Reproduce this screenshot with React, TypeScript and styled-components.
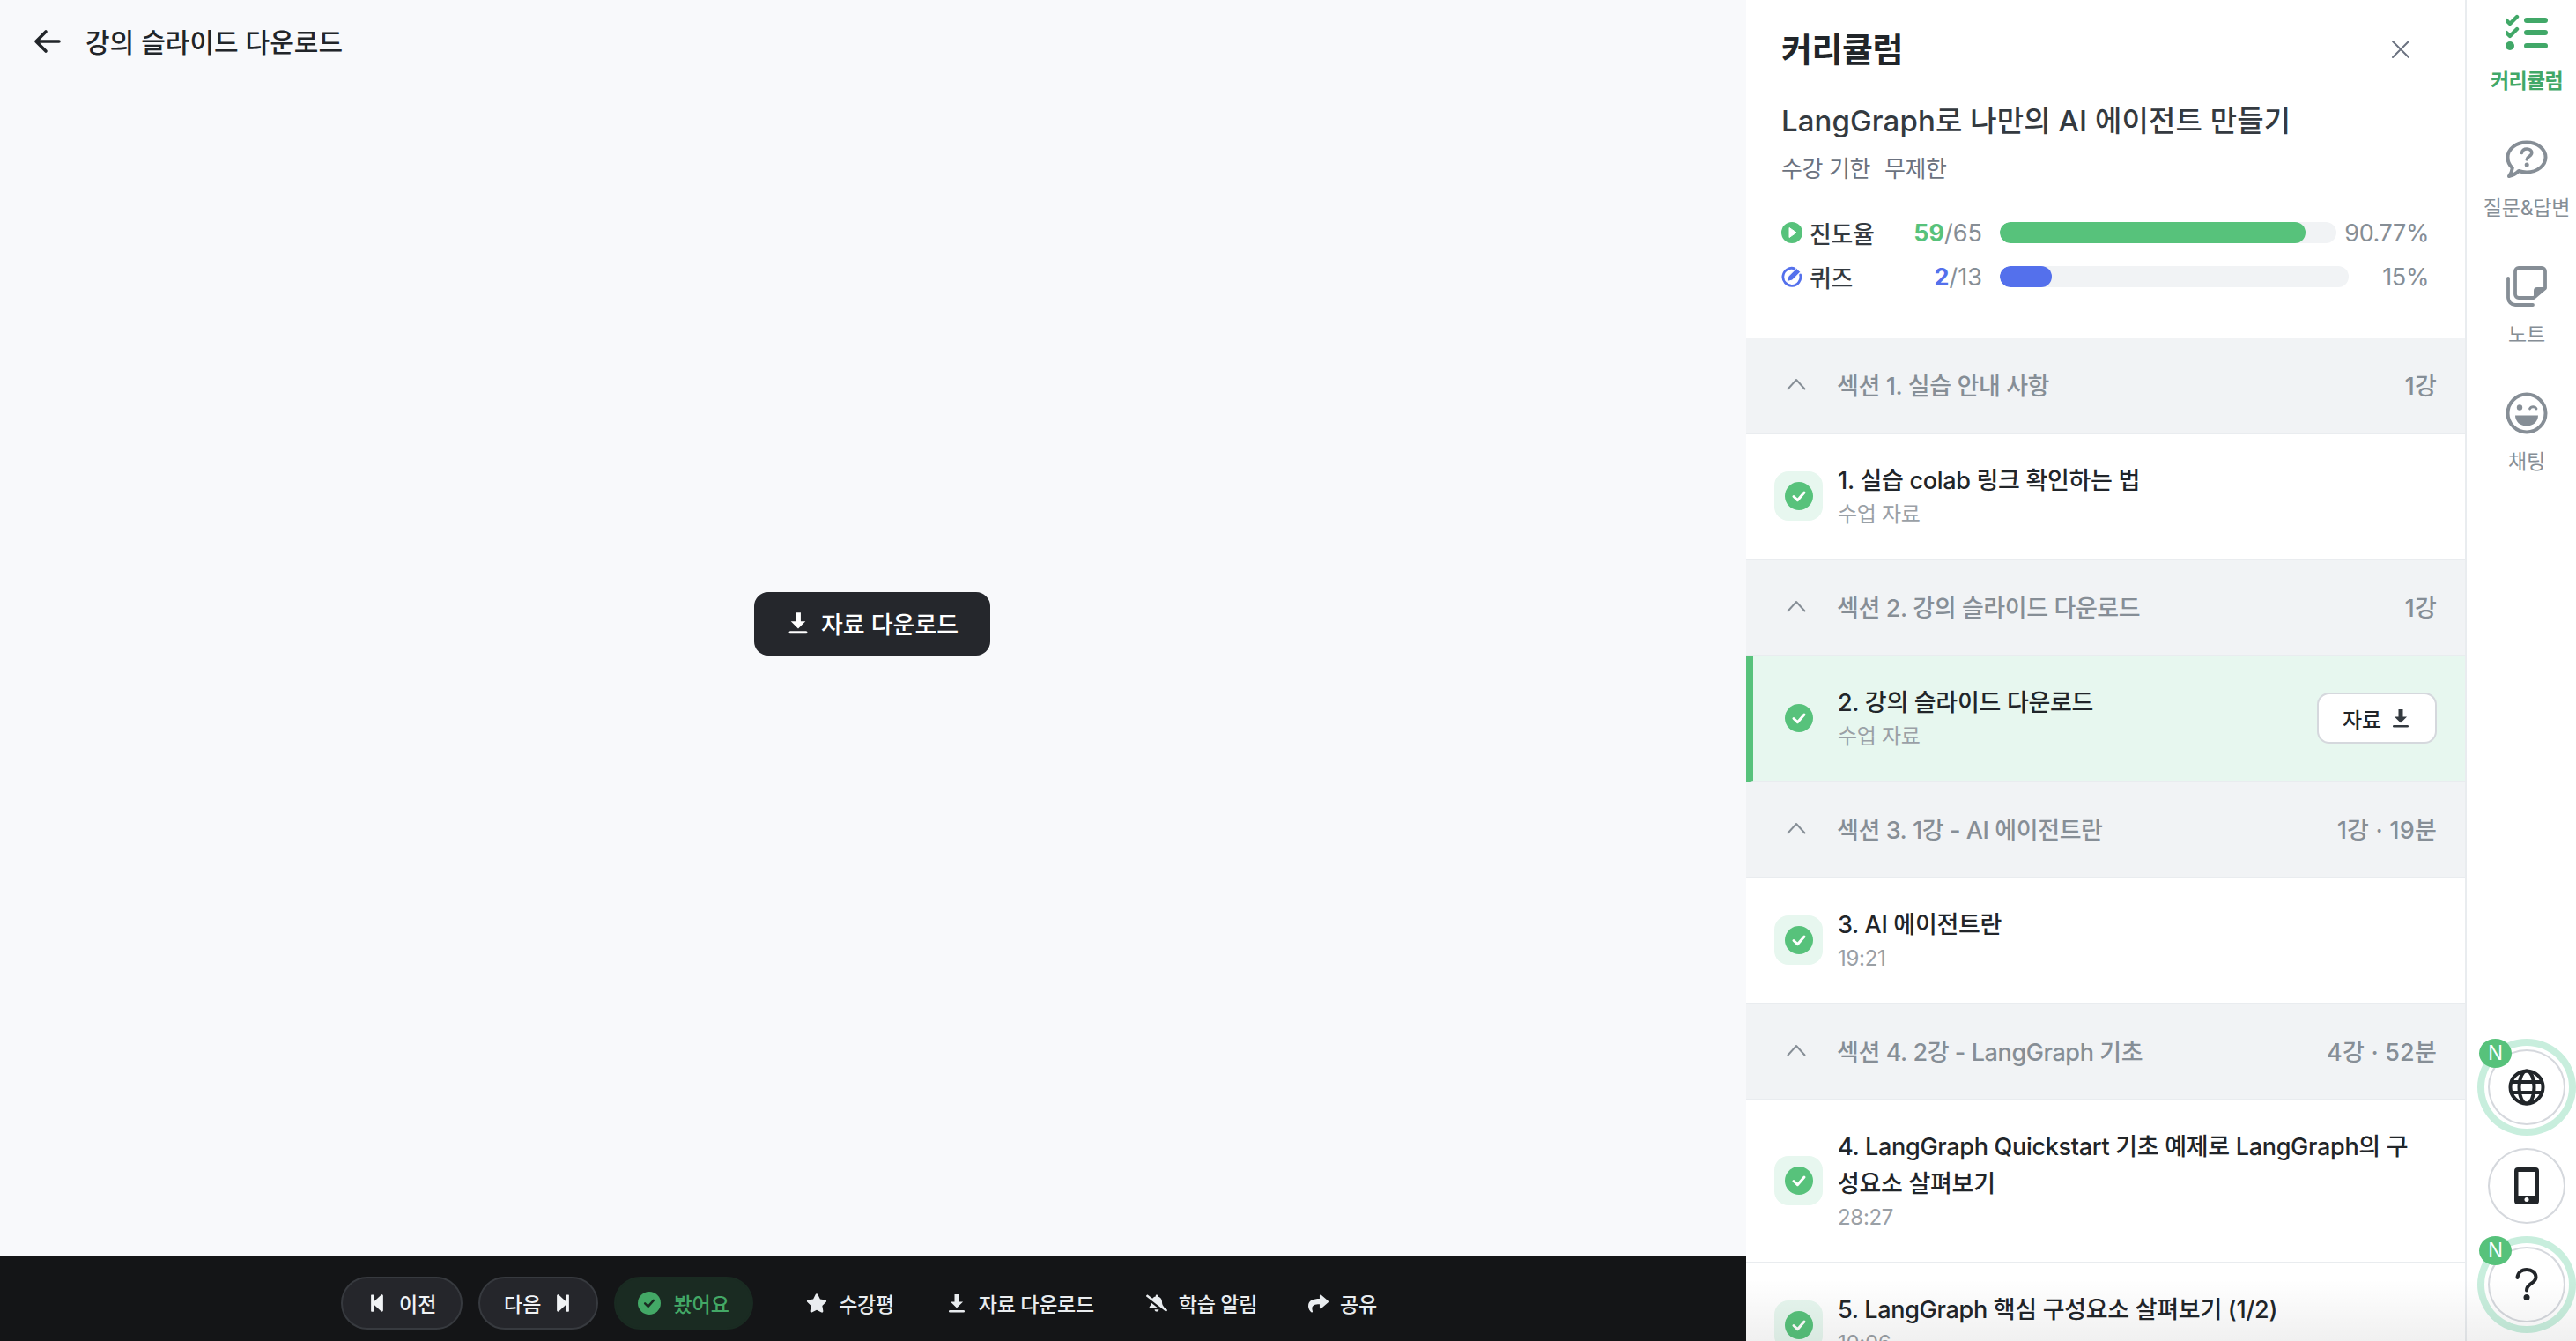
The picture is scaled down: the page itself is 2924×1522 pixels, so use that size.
import React from 'react';
import styled, { createGlobalStyle } from 'styled-components';
import { FaStar, FaShare, FaBellSlash, FaStepBackward, FaStepForward } from 'react-icons/fa';

const GlobalStyle = createGlobalStyle`
  html, body {
    margin: 0;
    padding: 0;
    background: #f8f9fb;
    font-family: Inter, "Noto Sans CJK KR", "Noto Sans", sans-serif;
    overflow: hidden;
  }
  * { box-sizing: border-box; }
`;

const Page = styled.div`
  display: flex;
  width: 2924px;
  height: 1522px;
  overflow: hidden;
`;

const Main = styled.main`
  position: relative;
  flex: 0 0 1982px;
  display: flex;
  flex-direction: column;
  background: #f8f9fb;
`;

const TopBar = styled.header`
  position: absolute;
  top: 0;
  left: 0;
  right: 0;
  height: 94px;
  display: flex;
  align-items: center;
  gap: 27px;
  padding-left: 38px;
`;

const PageTitle = styled.h1`
  margin: -2px 0 0;
  font-size: 30px;
  font-weight: 500;
  letter-spacing: 0;
  color: #212529;
`;

const Stage = styled.div`
  flex: 1;
  display: flex;
  align-items: center;
  justify-content: center;
  padding: 0 2px 10px 0;
`;

const DownloadButton = styled.button`
  display: flex;
  align-items: center;
  justify-content: center;
  gap: 12px;
  width: 268px;
  height: 72px;
  padding: 0 0 2px;
  border: 0;
  border-radius: 16px;
  background: #25272c;
  color: #fff;
  font: 500 27px Inter, "Noto Sans CJK KR", sans-serif;
`;

const BottomBar = styled.footer`
  flex: 0 0 96px;
  display: flex;
  align-items: center;
  justify-content: center;
  padding: 10px 32px 0 0;
  background: #141517;
`;

const Pill = styled.button<{ $seen?: boolean; $w: number }>`
  display: flex;
  align-items: center;
  justify-content: center;
  gap: 14px;
  width: ${(p) => p.$w}px;
  height: 60px;
  margin-right: 18px;
  border-radius: 30px;
  border: 2px solid ${(p) => (p.$seen ? '#1a2b22' : '#373a3f')};
  background: ${(p) => (p.$seen ? '#1a2b22' : '#25262b')};
  color: ${(p) => (p.$seen ? '#43a866' : '#f1f3f5')};
  font: 500 23px Inter, "Noto Sans CJK KR", sans-serif;
`;

const BarAction = styled.button<{ $gap: number }>`
  display: flex;
  align-items: center;
  gap: 13px;
  margin-left: ${(p) => p.$gap}px;
  padding: 0;
  border: 0;
  background: none;
  color: #e9ecef;
  font: 500 23px Inter, "Noto Sans CJK KR", sans-serif;
  letter-spacing: -0.3px;
`;

const Side = styled.div`
  position: relative;
  flex: 1;
  display: flex;
  min-width: 0;
`;

const Panel = styled.aside`
  flex: 0 0 816px;
  display: flex;
  flex-direction: column;
  background: #fff;
  overflow: hidden;
`;

const PanelHead = styled.div`
  flex: 0 0 384px;
  padding: 0 40px;
`;

const PanelTitleRow = styled.div`
  display: flex;
  align-items: center;
  justify-content: space-between;
  height: 112px;
  padding-right: 22px;
`;

const PanelTitle = styled.h2`
  margin: -6px 0 0;
  font-size: 38px;
  font-weight: 700;
  letter-spacing: -0.5px;
  color: #212529;
`;

const CourseTitle = styled.div`
  height: 50px;
  line-height: 50px;
  font-size: 33px;
  font-weight: 500;
  letter-spacing: 0.1px;
  color: #343a40;
`;

const Expire = styled.div`
  display: flex;
  gap: 16px;
  height: 60px;
  padding-top: 6px;
  line-height: 48px;
  font-size: 26px;
  letter-spacing: -0.4px;
  color: #6b7280;
`;

const Stats = styled.div`
  display: flex;
  flex-direction: column;
  gap: 26px;
  margin-top: 30px;
  margin-right: 1px;
`;

const StatRow = styled.div`
  display: flex;
  align-items: center;
  height: 24px;
`;

const StatLabel = styled.div`
  display: flex;
  align-items: center;
  gap: 8px;
  width: 139px;
  font-size: 27px;
  font-weight: 500;
  letter-spacing: -0.4px;
  color: #343a40;
`;

const StatCount = styled.div`
  width: 109px;
  padding-right: 20px;
  text-align: right;
  font-size: 27px;
  color: #868e96;
`;

const StatStrong = styled.strong<{ $color: string }>`
  font-weight: 700;
  color: ${(p) => p.$color};
`;

const Track = styled.div<{ $w: number }>`
  width: ${(p) => p.$w}px;
  height: 24px;
  border-radius: 12px;
  background: #f1f3f5;
  overflow: hidden;
`;

const Fill = styled.div<{ $color: string }>`
  height: 100%;
  border-radius: 12px;
  background: ${(p) => p.$color};
`;

const StatPercent = styled.div`
  flex: 1;
  text-align: right;
  font-size: 27px;
  letter-spacing: -0.4px;
  color: #868e96;
`;

const SectionHead = styled.div`
  flex: 0 0 109px;
  display: flex;
  align-items: center;
  padding: 0 32px 3px 46px;
  border-bottom: 2px solid #e9ecef;
  background: #f1f3f5;
  color: #868e96;
  font-size: 27px;
  font-weight: 500;
  letter-spacing: -0.4px;
`;

const SectionName = styled.div`
  flex: 1;
  margin-left: 35px;
`;

const SectionMeta = styled.span`
  letter-spacing: 0.2px;
`;

const Lesson = styled.div<{ $active?: boolean }>`
  flex: 0 0 auto;
  display: flex;
  align-items: center;
  gap: 17px;
  padding: 32px 32px 33px ${(p) => (p.$active ? '24px' : '32px')};
  border-bottom: 2px solid #e9ecef;
  border-left: ${(p) => (p.$active ? '8px solid #57c27b' : '0')};
  background: ${(p) => (p.$active ? '#e7f7ef' : '#fff')};
`;

const CheckTile = styled.div<{ $active?: boolean }>`
  flex: 0 0 55px;
  display: flex;
  align-items: center;
  justify-content: center;
  height: 56px;
  border-radius: 16px;
  background: ${(p) => (p.$active ? 'transparent' : '#e7f7ef')};
`;

const LessonText = styled.div`
  flex: 1;
  min-width: 0;
  padding-right: 20px;
`;

const LessonTitle = styled.div`
  line-height: 42px;
  font-size: 27px;
  font-weight: 500;
  letter-spacing: -0.3px;
  color: #212529;
`;

const LessonSub = styled.div`
  line-height: 34px;
  font-size: 24px;
  letter-spacing: -0.3px;
  color: #9aa0a6;
`;

const MaterialButton = styled.button`
  flex: 0 0 136px;
  display: flex;
  align-items: center;
  justify-content: center;
  gap: 10px;
  height: 58px;
  border: 2px solid #d5d8dd;
  border-radius: 14px;
  background: #fff;
  color: #212529;
  font: 500 24px Inter, "Noto Sans CJK KR", sans-serif;
`;

const Rail = styled.nav`
  flex: 1;
  display: flex;
  flex-direction: column;
  align-items: center;
  padding-left: 12px;
  border-left: 2px solid #e9ecef;
  background: #fff;
`;

const RailItem = styled.div<{ $active?: boolean }>`
  flex: 0 0 144px;
  display: flex;
  flex-direction: column;
  align-items: center;
  width: 100%;
  padding-top: 14px;
  color: ${(p) => (p.$active ? '#41a868' : '#868e96')};
  font-size: 23px;
  font-weight: ${(p) => (p.$active ? 600 : 400)};
  letter-spacing: ${(p) => (p.$active ? '-0.6px' : '-0.2px')};
  white-space: nowrap;
`;

const RailIcon = styled.div`
  display: flex;
  align-items: center;
  justify-content: center;
  height: 46px;
  margin-bottom: 13px;
`;

const RailStack = styled.div`
  display: flex;
  flex-direction: column;
  gap: 26px;
  margin-top: auto;
  padding-bottom: 21px;
`;

const RoundButton = styled.button<{ $ring?: boolean }>`
  position: relative;
  display: flex;
  align-items: center;
  justify-content: center;
  width: 88px;
  height: 86px;
  padding: 0;
  border: 2px solid #d5d8dd;
  border-radius: 50%;
  background: #fff;
  box-shadow: ${(p) => (p.$ring ? '0 0 0 4px #fff, 0 0 0 12px #c8eedd' : 'none')};
`;

const NewBadge = styled.span`
  position: absolute;
  top: -14px;
  left: -12px;
  width: 37px;
  height: 33px;
  border-radius: 50%;
  background: #57c27b;
  color: #fff;
  font-size: 23px;
  line-height: 33px;
  text-align: center;
`;

const BottomFade = styled.div`
  position: absolute;
  left: 0;
  right: 0;
  bottom: 0;
  height: 70px;
  background: linear-gradient(rgba(0, 0, 0, 0), rgba(0, 0, 0, 0.06));
  pointer-events: none;
`;

const DownloadIcon = ({ size, color }: { size: number; color: string }) => (
  <svg width={size} height={size} viewBox="0 0 24 24" fill="none">
    <path d="M9.500 2h5v8.500h4.600L12 17.600 4.900 10.500h4.600z" fill={color} />
    <rect x="3" y="20" width="18" height="2.600" rx="1.300" fill={color} />
  </svg>
);

const CheckCircle = ({ size = 32, dark }: { size?: number; dark?: boolean }) => (
  <svg width={size} height={size} viewBox="0 0 32 32">
    <circle cx="16" cy="16" r="16" fill={dark ? '#43a866' : '#57c27b'} />
    <path
      d="M10 16.500l4.400 4.200 7.600-8.600"
      fill="none"
      stroke={dark ? '#1a2b22' : '#fff'}
      strokeWidth="3"
      strokeLinecap="round"
      strokeLinejoin="round"
    />
  </svg>
);

const Chevron = () => (
  <svg width="22" height="14" viewBox="0 0 22 14" fill="none">
    <path d="M1.500 12.500L11 2l9.500 10.500" stroke="#868e96" strokeWidth="2" strokeLinecap="round" strokeLinejoin="round" />
  </svg>
);

const BackArrow = () => (
  <svg width="32" height="32" viewBox="0 0 32 32" fill="none">
    <path d="M3 16h26M14 5L3 16l11 11" stroke="#212529" strokeWidth="3.600" strokeLinecap="round" strokeLinejoin="round" />
  </svg>
);

const CloseIcon = () => (
  <svg width="22" height="22" viewBox="0 0 22 22" fill="none">
    <path d="M2 2l18 18M20 2L2 20" stroke="#6b7280" strokeWidth="2" strokeLinecap="round" />
  </svg>
);

const PlayBadge = () => (
  <svg width="24" height="24" viewBox="0 0 24 24">
    <circle cx="12" cy="12" r="12" fill="#57c27b" />
    <path d="M9 6.500l8 5.500-8 5.500z" fill="#fff" stroke="#fff" strokeWidth="1" strokeLinejoin="round" />
  </svg>
);

const QuizBadge = () => (
  <svg width="24" height="24" viewBox="0 0 24 24" fill="none">
    <path d="M15 2.800A10 10 0 1 0 21.600 10" stroke="#5470ec" strokeWidth="2.800" strokeLinecap="round" />
    <path d="M6.500 17.500l1.400-5.800L17.200 2.400l4.400 4.400-9.300 9.300z" fill="#5470ec" stroke="#fff" strokeWidth="1" strokeLinejoin="round" />
  </svg>
);

const CurriculumIcon = () => (
  <svg width="48" height="42" viewBox="0 0 48 42" fill="#41a868">
    <path d="M1 7l4 4 8-8" fill="none" stroke="#41a868" strokeWidth="4.400" strokeLinecap="round" strokeLinejoin="round" />
    <path d="M1 21l4 4 8-8" fill="none" stroke="#41a868" strokeWidth="4.400" strokeLinecap="round" strokeLinejoin="round" />
    <circle cx="5" cy="36" r="5" />
    <rect x="21" y="4" width="27" height="6" rx="3" />
    <rect x="21" y="18" width="27" height="6" rx="3" />
    <rect x="21" y="33" width="27" height="6" rx="3" />
  </svg>
);

const QuestionIcon = () => (
  <svg width="48" height="44" viewBox="0 0 48 44" fill="none">
    <path
      d="M24 2.500c12 0 21.500 7.600 21.500 17S36 36.500 24 36.500c-3.200 0-6.200-.5-9-1.500-2.600 2.600-6 5-11 6 2-2.600 3.400-5.600 3.800-9.500C4 28.300 2.500 24.200 2.500 19.500 2.500 10.100 12 2.500 24 2.500z"
      stroke="#868e96"
      strokeWidth="4"
      strokeLinejoin="round"
    />
    <path d="M18.500 14.500c.6-3 2.800-4.500 5.700-4.500 3.200 0 5.500 1.800 5.500 4.500 0 4-5.500 3.800-5.500 7.500" stroke="#868e96" strokeWidth="3.600" strokeLinecap="round" />
    <circle cx="24.200" cy="28" r="2.500" fill="#868e96" />
  </svg>
);

const NoteIcon = () => (
  <svg width="46" height="46" viewBox="0 0 46 46" fill="none">
    <path d="M14 2h26a4 4 0 0 1 4 4v19L31 36H14a4 4 0 0 1-4-4V6a4 4 0 0 1 4-4z" stroke="#868e96" strokeWidth="3.800" strokeLinejoin="round" />
    <path d="M44 24l-9 0a4 4 0 0 0-4 4v9z" fill="#868e96" />
    <path d="M2 14v22a8 8 0 0 0 8 8h20" stroke="#868e96" strokeWidth="3.800" strokeLinecap="round" />
  </svg>
);

const ChatIcon = () => (
  <svg width="48" height="48" viewBox="0 0 48 48" fill="none">
    <circle cx="24" cy="24" r="21.500" stroke="#868e96" strokeWidth="4" />
    <circle cx="16" cy="17.500" r="3.200" fill="#868e96" />
    <path d="M27.500 19c1.500-3 6-3 7.500 0" stroke="#868e96" strokeWidth="2.800" strokeLinecap="round" />
    <path d="M11 26.500h26c0 7-5.500 12-13 12s-13-5-13-12z" fill="#868e96" />
  </svg>
);

const GlobeIcon = () => (
  <svg width="42" height="42" viewBox="0 0 42 42" fill="none" stroke="#212529" strokeWidth="4">
    <circle cx="21" cy="21" r="18.500" />
    <ellipse cx="21" cy="21" rx="8.500" ry="18.500" />
    <path d="M3 15h36M3 27h36" />
  </svg>
);

const PhoneIcon = () => (
  <svg width="28" height="42" viewBox="0 0 28 42">
    <path
      fillRule="evenodd"
      d="M4 0h20a4 4 0 0 1 4 4v34a4 4 0 0 1-4 4H4a4 4 0 0 1-4-4V4a4 4 0 0 1 4-4zM4.500 5v27h19V5z"
      fill="#212529"
    />
    <circle cx="14" cy="36.500" r="2.500" fill="#fff" />
  </svg>
);

const HelpIcon = () => (
  <svg width="26" height="38" viewBox="0 0 26 38" fill="none">
    <path d="M2.500 11c.5-5.500 4.500-9 10.500-9 6 0 10.500 3.500 10.500 8.500 0 7.500-10.500 7-10.500 15" stroke="#212529" strokeWidth="4" strokeLinecap="round" />
    <circle cx="13" cy="33.500" r="3.500" fill="#212529" />
  </svg>
);

type LessonData = { title: string; sub: string; active?: boolean; material?: boolean };
type SectionData = { name: string; meta: string; lessons: LessonData[] };

const sections: SectionData[] = [
  { name: '섹션 1. 실습 안내 사항', meta: '1강', lessons: [{ title: '1. 실습 colab 링크 확인하는 법', sub: '수업 자료' }] },
  {
    name: '섹션 2. 강의 슬라이드 다운로드',
    meta: '1강',
    lessons: [{ title: '2. 강의 슬라이드 다운로드', sub: '수업 자료', active: true, material: true }]
  },
  { name: '섹션 3. 1강 - AI 에이전트란', meta: '1강 · 19분', lessons: [{ title: '3. AI 에이전트란', sub: '19:21' }] },
  {
    name: '섹션 4. 2강 - LangGraph 기초',
    meta: '4강 · 52분',
    lessons: [
      { title: '4. LangGraph Quickstart 기초 예제로 LangGraph의 구성요소 살펴보기', sub: '28:27' },
      { title: '5. LangGraph 핵심 구성요소 살펴보기 (1/2)', sub: '10:06' }
    ]
  }
];

const App = () => (
  <Page>
    <GlobalStyle />
    <Main>
      <TopBar>
        <BackArrow />
        <PageTitle>강의 슬라이드 다운로드</PageTitle>
      </TopBar>
      <Stage>
        <DownloadButton>
          <DownloadIcon size={28} color="#fff" />
          자료 다운로드
        </DownloadButton>
      </Stage>
      <BottomBar>
        <Pill $w={138}>
          <FaStepBackward size={22} />
          이전
        </Pill>
        <Pill $w={136}>
          다음
          <FaStepForward size={22} />
        </Pill>
        <Pill $w={158} $seen>
          <CheckCircle size={26} dark />
          봤어요
        </Pill>
        <BarAction $gap={42}>
          <FaStar size={24} />
          수강평
        </BarAction>
        <BarAction $gap={59}>
          <DownloadIcon size={24} color="#e9ecef" />
          자료 다운로드
        </BarAction>
        <BarAction $gap={59}>
          <FaBellSlash size={24} />
          학습 알림
        </BarAction>
        <BarAction $gap={58}>
          <FaShare size={23} />
          공유
        </BarAction>
      </BottomBar>
    </Main>
    <Side>
      <Panel>
        <PanelHead>
          <PanelTitleRow>
            <PanelTitle>커리큘럼</PanelTitle>
            <CloseIcon />
          </PanelTitleRow>
          <CourseTitle>LangGraph로 나만의 AI 에이전트 만들기</CourseTitle>
          <Expire>
            <span>수강 기한</span>
            <span>무제한</span>
          </Expire>
          <Stats>
            <StatRow>
              <StatLabel>
                <PlayBadge />
                진도율
              </StatLabel>
              <StatCount>
                <StatStrong $color="#57c27b">59</StatStrong>/65
              </StatCount>
              <Track $w={382}>
                <Fill $color="#57c27b" style={{ width: '90.77%' }} />
              </Track>
              <StatPercent>90.77%</StatPercent>
            </StatRow>
            <StatRow>
              <StatLabel>
                <QuizBadge />
                퀴즈
              </StatLabel>
              <StatCount>
                <StatStrong $color="#5470ec">2</StatStrong>/13
              </StatCount>
              <Track $w={396}>
                <Fill $color="#5470ec" style={{ width: '15%' }} />
              </Track>
              <StatPercent>15%</StatPercent>
            </StatRow>
          </Stats>
        </PanelHead>
        {sections.map((section) => (
          <React.Fragment key={section.name}>
            <SectionHead>
              <Chevron />
              <SectionName>{section.name}</SectionName>
              <SectionMeta>{section.meta}</SectionMeta>
            </SectionHead>
            {section.lessons.map((lesson) => (
              <Lesson key={lesson.title} $active={lesson.active}>
                <CheckTile $active={lesson.active}>
                  <CheckCircle />
                </CheckTile>
                <LessonText>
                  <LessonTitle>{lesson.title}</LessonTitle>
                  <LessonSub>{lesson.sub}</LessonSub>
                </LessonText>
                {lesson.material && (
                  <MaterialButton>
                    자료
                    <DownloadIcon size={24} color="#343a40" />
                  </MaterialButton>
                )}
              </Lesson>
            ))}
          </React.Fragment>
        ))}
      </Panel>
      <Rail>
        <RailItem $active>
          <RailIcon>
            <CurriculumIcon />
          </RailIcon>
          커리큘럼
        </RailItem>
        <RailItem>
          <RailIcon>
            <QuestionIcon />
          </RailIcon>
          질문&답변
        </RailItem>
        <RailItem>
          <RailIcon>
            <NoteIcon />
          </RailIcon>
          노트
        </RailItem>
        <RailItem>
          <RailIcon>
            <ChatIcon />
          </RailIcon>
          채팅
        </RailItem>
        <RailStack>
          <RoundButton $ring>
            <NewBadge>N</NewBadge>
            <GlobeIcon />
          </RoundButton>
          <RoundButton>
            <PhoneIcon />
          </RoundButton>
          <RoundButton $ring>
            <NewBadge>N</NewBadge>
            <HelpIcon />
          </RoundButton>
        </RailStack>
      </Rail>
      <BottomFade />
    </Side>
  </Page>
);

export default App;
